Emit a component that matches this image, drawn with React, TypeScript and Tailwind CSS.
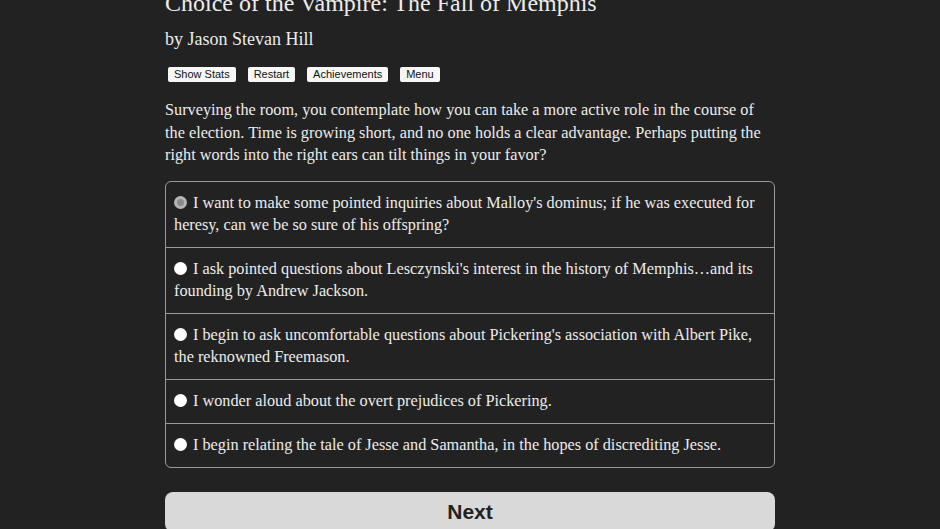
const options = [
  "I want to make some pointed inquiries about Malloy's dominus; if he was executed for heresy, can we be so sure of his offspring?",
  "I ask pointed questions about Lesczynski's interest in the history of Memphis\u2026and its founding by Andrew Jackson.",
  "I begin to ask uncomfortable questions about Pickering's association with Albert Pike, the reknowned Freemason.",
  'I wonder aloud about the overt prejudices of Pickering.',
  'I begin relating the tale of Jesse and Samantha, in the hopes of discrediting Jesse.',
]

const buttons = ['Show Stats', 'Restart', 'Achievements', 'Menu']

export default function App() {
  const serif = { fontFamily: '"Liberation Serif", "DejaVu Serif", serif' }
  const sans = { fontFamily: '"Liberation Sans", Arial, sans-serif' }

  return (
    <div className="min-h-[529px] bg-[#222222] overflow-hidden">
      <div className="w-[610px] ml-[165px] text-[#ececec]" style={serif}>
        <h1 className="text-[24px] leading-[30px] -mt-[12px]">
          Choice of the Vampire: The Fall of Memphis
        </h1>
        <p className="text-[18px] leading-[24px] mt-[9px]">by Jason Stevan Hill</p>

        {/* top menu buttons */}
        <div className="flex gap-[12px] mt-[16px] ml-[3px]">
          {buttons.map((b) => (
            <button
              key={b}
              className="h-[15px] px-[6px] bg-[#f7f7f7] text-[#111] rounded-[2px] text-[11px] leading-[15px]"
              style={sans}
            >
              {b}
            </button>
          ))}
        </div>

        <p className="text-[16.25px] leading-[22.5px] mt-[17px]">
          Surveying the room, you contemplate how you can take a more active role in the course of
          <br />
          the election. Time is growing short, and no one holds a clear advantage. Perhaps putting the
          <br />
          right words into the right ears can tilt things in your favor?
        </p>

        <div className="mt-[14px] border border-[#9a9a9a] rounded-[6px]">
          {options.map((o, i) => (
            <div
              key={i}
              className={`px-[8px] py-[10.5px] text-[16.25px] leading-[22px] ${
                i > 0 ? 'border-t border-[#9a9a9a]' : ''
              }`}
            >
              <span
                className={`inline-block w-[13px] h-[13px] rounded-full align-[-1px] mr-[6px] ${
                  i === 0 ? 'bg-[#8a8a8a] border-[3px] border-[#b5b5b5]' : 'bg-white'
                }`}
              />
              {o}
            </div>
          ))}
        </div>

        <button
          className="mt-[24px] w-full h-[40px] bg-[#d9d9d9] rounded-[8px] text-[21px] font-bold text-[#222]"
          style={sans}
        >
          Next
        </button>
      </div>
    </div>
  )
}
